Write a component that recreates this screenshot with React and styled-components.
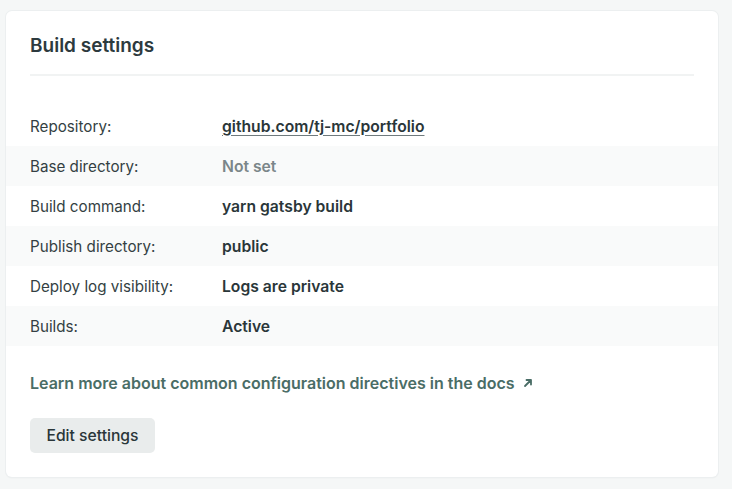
import React from "react";
import styled, { createGlobalStyle } from "styled-components";

const Global = createGlobalStyle`
  html, body { margin: 0; padding: 0; background: #f5f7f7; }
  body { font-family: Inter, "Noto Sans", sans-serif; -webkit-font-smoothing: antialiased; }
`;

const Page = styled.div`
  padding: 11px 14px 12px 6px;
`;

const Card = styled.section`
  background: #fff;
  border-radius: 6px;
  box-shadow: 0 0 0 1px #eceff0, 0 1px 2px rgba(0, 0, 0, 0.06);
  padding: 0 0 24px;
  height: 466px;
  box-sizing: border-box;
`;

const Header = styled.div`
  margin: 0 24px;
  padding: 23px 0 17px;
  border-bottom: 2px solid #f1f3f3;
`;

const Title = styled.h2`
  margin: 0;
  font-size: 19px;
  line-height: 23px;
  font-weight: 600;
  color: #2d3a3e;
`;

const List = styled.dl`
  margin: 30px 0 0;
  padding: 0;
`;

const Row = styled.div`
  display: grid;
  grid-template-columns: 192px 1fr;
  align-items: center;
  height: 40px;
  padding: 0 24px;
  background: ${(p) => (p.$striped ? "#f9fafa" : "#fff")};
`;

const Label = styled.dt`
  font-size: 15.2px;
  color: #343f43;
  font-weight: 400;
`;

const Value = styled.dd`
  margin: 0;
  font-size: 15.7px;
  font-weight: 600;
  color: ${(p) => (p.$muted ? "#7b8689" : "#2a3639")};
`;

const RepoLink = styled.a`
  color: #2a3639;
  text-decoration: underline;
  text-decoration-color: #6f7a7d;
  text-underline-offset: 3px;
`;

const Footer = styled.div`
  padding: 27px 24px 0;
  display: flex;
  flex-direction: column;
  align-items: flex-start;
  gap: 25px;
`;

const DocsLink = styled.a`
  font-size: 16px;
  font-weight: 600;
  color: #4a6d66;
  text-decoration: none;
  display: inline-flex;
  align-items: center;
  gap: 8px;
`;

const Button = styled.button`
  font-family: inherit;
  font-size: 15.7px;
  font-weight: 500;
  color: #2a3639;
  background: #e9ecec;
  border: none;
  border-radius: 5px;
  height: 35px;
  width: 125px;
  padding: 0;
`;

const rows = [
  { label: "Repository:", value: "github.com/tj-mc/portfolio", link: true },
  { label: "Base directory:", value: "Not set", muted: true },
  { label: "Build command:", value: "yarn gatsby build" },
  { label: "Publish directory:", value: "public" },
  { label: "Deploy log visibility:", value: "Logs are private" },
  { label: "Builds:", value: "Active" },
];

export default function App() {
  return (
    <>
      <Global />
      <Page>
        <Card>
          <Header>
            <Title>Build settings</Title>
          </Header>
          <List>
            {rows.map((r, i) => (
              <Row key={r.label} $striped={i % 2 === 1}>
                <Label>{r.label}</Label>
                <Value $muted={r.muted}>
                  {r.link ? <RepoLink href="#">{r.value}</RepoLink> : r.value}
                </Value>
              </Row>
            ))}
          </List>
          <Footer>
            <DocsLink href="#">
              Learn more about common configuration directives in the docs
              <svg width="10" height="10" viewBox="0 0 10 10" fill="none" stroke="#4a6d66" strokeWidth="1.8" strokeLinecap="round" strokeLinejoin="round">
                <path d="M2 8 L8 2 M3.5 2 H8 V6.5" />
              </svg>
            </DocsLink>
            <Button>Edit settings</Button>
          </Footer>
        </Card>
      </Page>
    </>
  );
}
